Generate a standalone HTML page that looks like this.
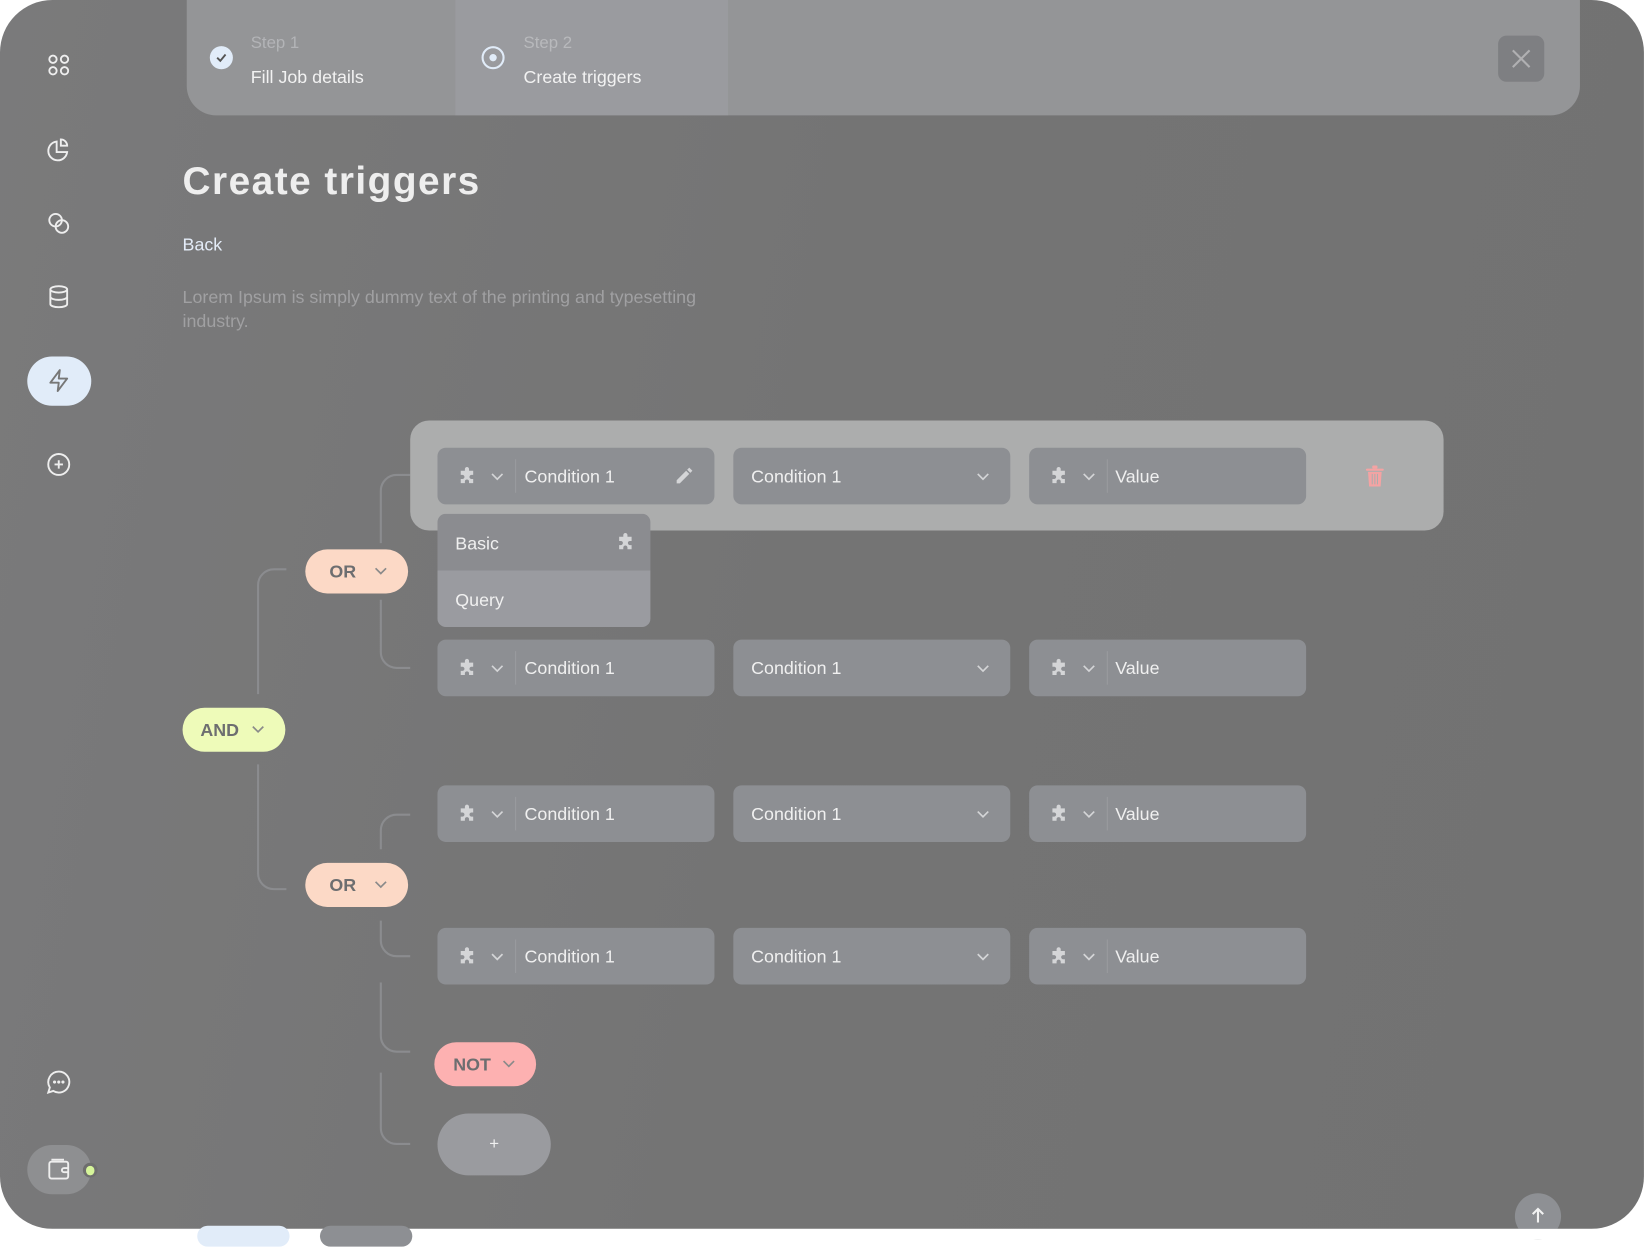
<!DOCTYPE html>
<html><head><meta charset="utf-8"><style>
html,body{margin:0;padding:0;background:#fff;overflow:hidden;width:1645px;height:1232px}
#s{position:absolute;left:0;top:0;width:1568px;height:1175px;transform:scale(1.0491,1.0485);transform-origin:0 0;font-family:"Liberation Sans",sans-serif}
.a{position:absolute}
.main{left:0;top:0;width:1567px;height:1172px;border-radius:50px;background:linear-gradient(100deg,#7a7a7b 0%,#747474 50%,#727272 100%);overflow:hidden}
.inp{position:absolute;height:54px;background:#8d8f93;border-radius:8px;color:#f0f0f0;font-size:17px;line-height:56px}
.pill{position:absolute;height:42px;border-radius:21px;color:#6d6e70;font-size:17px;font-weight:bold;line-height:43px}
.ico{position:absolute}
</style></head><body><div id="s">
<div class="a main"></div>

<!-- Sidebar -->
<svg class="ico" style="left:44px;top:50px" width="24" height="24" viewBox="0 0 24 24" fill="none" stroke="#eee" stroke-width="1.8"><rect x="3" y="3" width="7" height="7" rx="3.5"/><rect x="14" y="3" width="7" height="7" rx="3.5"/><rect x="3" y="14" width="7" height="7" rx="3.5"/><rect x="14" y="14" width="7" height="7" rx="3.5"/></svg>
<svg class="ico" style="left:44px;top:131px" width="24" height="24" viewBox="0 0 24 24" fill="none" stroke="#eee" stroke-width="1.8"><path d="M10 4a9 9 0 1 0 10 10H10z"/><path d="M14 2v6h6a6 6 0 0 0-6-6z"/></svg>
<svg class="ico" style="left:44px;top:201px" width="24" height="24" viewBox="0 0 24 24" fill="none" stroke="#eee" stroke-width="1.8"><circle cx="9" cy="9" r="6"/><circle cx="15" cy="15" r="6"/></svg>
<svg class="ico" style="left:44px;top:271px" width="24" height="24" viewBox="0 0 24 24" fill="none" stroke="#eee" stroke-width="1.8"><ellipse cx="12" cy="5" rx="8" ry="3"/><path d="M4 5v14c0 1.7 3.6 3 8 3s8-1.3 8-3V5M4 12c0 1.7 3.6 3 8 3s8-1.3 8-3"/></svg>
<div class="a" style="left:26px;top:340px;width:61px;height:47px;border-radius:24px;background:#e1ecf9"></div>
<svg class="ico" style="left:44px;top:351px" width="24" height="24" viewBox="0 0 24 24" fill="none" stroke="#777" stroke-width="1.8" stroke-linejoin="round"><path d="M13 2L4 14h8l-1 8 9-12h-8z"/></svg>
<svg class="ico" style="left:44px;top:431px" width="24" height="24" viewBox="0 0 24 24" fill="none" stroke="#eee" stroke-width="1.8"><circle cx="12" cy="12" r="10"/><path d="M12 8v8M8 12h8"/></svg>
<svg class="ico" style="left:44px;top:1020px" width="24" height="24" viewBox="0 0 24 24" fill="none" stroke="#eee" stroke-width="1.8"><path d="M12 2a10 10 0 0 0-8.5 15.2L2 22l4.8-1.5A10 10 0 1 0 12 2z"/><circle cx="8" cy="12" r=".6" fill="#eee"/><circle cx="12" cy="12" r=".6" fill="#eee"/><circle cx="16" cy="12" r=".6" fill="#eee"/></svg>
<div class="a" style="left:26px;top:1092px;width:61px;height:47px;border-radius:24px;background:#8e8f91"></div>
<svg class="ico" style="left:44px;top:1103px" width="24" height="24" viewBox="0 0 24 24" fill="none" stroke="#eee" stroke-width="1.8"><rect x="3" y="5" width="18" height="16" rx="2"/><path d="M5 3h12M21 11h-4a2 2 0 0 0 0 4h4"/></svg>
<div class="a" style="left:79px;top:1109px;width:14px;height:14px;border-radius:7px;background:#6e6e6e"></div>
<div class="a" style="left:82px;top:1112px;width:8px;height:9px;border-radius:5px;background:#d6f59a"></div>

<!-- Steps header -->
<div class="a" style="left:178px;top:0;width:1328px;height:110px;background:#949597;border-radius:0 0 28px 28px;overflow:hidden">
 <div class="a" style="left:256px;top:0;width:260px;height:110px;background:#9a9b9f"></div>
</div>
<svg class="ico" style="left:199px;top:43px" width="24" height="24" viewBox="0 0 24 24"><circle cx="12" cy="12" r="11" fill="#e1ecf9"/><path d="M8 12l3 3 5-6" fill="none" stroke="#555" stroke-width="1.8"/></svg>
<div class="a" style="left:239px;top:33px;color:#b3b4b7;font-size:16px">Step 1</div>
<div class="a" style="left:239px;top:64px;color:#f2f2f2;font-size:17px">Fill Job details</div>
<svg class="ico" style="left:458px;top:43px" width="24" height="24" viewBox="0 0 24 24"><circle cx="12" cy="12" r="10" fill="none" stroke="#e1ecf9" stroke-width="2"/><circle cx="12" cy="12" r="3.5" fill="#e1ecf9"/></svg>
<div class="a" style="left:499px;top:33px;color:#b8b9bc;font-size:16px">Step 2</div>
<div class="a" style="left:499px;top:64px;color:#f2f2f2;font-size:17px">Create triggers</div>
<div class="a" style="left:1428px;top:34px;width:44px;height:44px;border-radius:8px;background:#7e7f82"></div>
<svg class="ico" style="left:1440px;top:46px" width="20" height="20" viewBox="0 0 20 20" stroke="#b0b0b2" stroke-width="2"><path d="M2 2l16 16M18 2L2 18"/></svg>

<!-- Title -->
<div class="a" style="left:174px;top:152px;color:#eeeeee;font-size:37px;font-weight:bold;letter-spacing:1.4px">Create triggers</div>
<div class="a" style="left:174px;top:224px;color:#e4ecf8;font-size:17px">Back</div>
<div class="a" style="left:174px;top:272px;color:#a0a0a2;font-size:17px;line-height:23px;width:540px">Lorem Ipsum is simply dummy text of the printing and typesetting industry.</div>

<!-- connector lines -->
<svg class="ico" style="left:0;top:0" width="1568" height="1175" fill="none" stroke="#8b8c8f" stroke-width="2">
 <path d="M273 543h-12a15 15 0 0 0-15 15v104"/>
 <path d="M246 729v104a15 15 0 0 0 15 15h12"/>
 <path d="M391 453h-13a15 15 0 0 0-15 15v50"/>
 <path d="M363 572v50a15 15 0 0 0 15 15h13"/>
 <path d="M391 777h-13a15 15 0 0 0-15 15v18"/>
 <path d="M363 878v19a15 15 0 0 0 15 15h13"/>
 <path d="M363 937v51a15 15 0 0 0 15 15h13"/>
 <path d="M363 1023v53a15 15 0 0 0 15 15h13"/>
</svg>

<!-- highlight row -->
<div class="a" style="left:391px;top:401px;width:985px;height:105px;border-radius:18px;background:#acadad"></div>

<div id="rows"></div>

<!-- dropdown -->
<div class="a" style="left:417px;top:490px;width:203px;height:108px;border-radius:8px;overflow:hidden">
 <div class="a" style="left:0;top:0;width:203px;height:54px;background:#8b8c90"></div>
 <div class="a" style="left:0;top:54px;width:203px;height:54px;background:#9a9ba0"></div>
 <div class="a" style="left:17px;top:19px;color:#f0f0f0;font-size:17px">Basic</div>
 <div class="a" style="left:17px;top:73px;color:#f0f0f0;font-size:17px">Query</div>
 <svg class="ico" style="left:170px;top:18px" width="19" height="19" viewBox="0 0 24 24" fill="#d4d5d7"><path d="M9 3a2.5 2.5 0 0 1 5 0v2h5v5h-2a2.5 2.5 0 0 0 0 5h2v5h-5v-2a2.5 2.5 0 0 0-5 0v2H4v-5h2a2.5 2.5 0 0 0 0-5H4V5h5z"/></svg>
</div>

<!-- trash -->
<svg class="ico" style="left:1301px;top:444px" width="19" height="20" viewBox="0 0 19 20" fill="#f4a3a3"><rect x="1" y="3" width="17" height="2" rx="1"/><rect x="7" y="0" width="5" height="3" rx="1"/><path d="M3 6h13l-1 14H4z"/><path d="M7 8v10M9.5 8v10M12 8v10" stroke="#acadad" stroke-width="1"/></svg>

<!-- pills -->
<div class="pill" style="left:291px;top:524px;width:98px;background:#fcd9c6"><span class="a" style="left:23px">OR</span><svg class="ico" style="left:66px;top:16px" width="12" height="9" viewBox="0 0 12 9" fill="none" stroke="#8a8a8a" stroke-width="1.6"><path d="M1 2l5 5 5-5"/></svg></div>
<div class="pill" style="left:174px;top:675px;width:98px;background:#eefbb9"><span class="a" style="left:17px">AND</span><svg class="ico" style="left:66px;top:16px" width="12" height="9" viewBox="0 0 12 9" fill="none" stroke="#8a8a8a" stroke-width="1.6"><path d="M1 2l5 5 5-5"/></svg></div>
<div class="pill" style="left:291px;top:823px;width:98px;background:#fcd9c6"><span class="a" style="left:23px">OR</span><svg class="ico" style="left:66px;top:16px" width="12" height="9" viewBox="0 0 12 9" fill="none" stroke="#8a8a8a" stroke-width="1.6"><path d="M1 2l5 5 5-5"/></svg></div>
<div class="pill" style="left:414px;top:994px;width:97px;background:#fdb1b1"><span class="a" style="left:18px">NOT</span><svg class="ico" style="left:65px;top:16px" width="12" height="9" viewBox="0 0 12 9" fill="none" stroke="#8a8a8a" stroke-width="1.6"><path d="M1 2l5 5 5-5"/></svg></div>
<div class="a" style="left:417px;top:1062px;width:108px;height:59px;border-radius:30px;background:#9a9b9f;color:#f0f0f0;text-align:center;line-height:59px;font-size:16px">+</div>

<!-- scroll top -->
<div class="a" style="left:1444px;top:1138px;width:44px;height:44px;border-radius:22px;background:#8e9094"></div>
<svg class="ico" style="left:1458px;top:1151px" width="16" height="16" viewBox="0 0 16 16" fill="none" stroke="#f2f2f2" stroke-width="2"><path d="M8 15V2M3 7l5-5 5 5"/></svg>
<div class="a" style="left:0;top:1172px;width:1568px;height:10px;background:#fff"></div>
<!-- peeking pills bottom -->
<div class="a" style="left:188px;top:1169px;width:88px;height:20px;border-radius:10px;background:#e1ecf9"></div>
<div class="a" style="left:305px;top:1169px;width:88px;height:20px;border-radius:10px;background:#8d8f93"></div>
</div>
<script>
var ys=[427,610,749,885],h='';
var pz='<svg class="ico" style="left:19px;top:18px" width="19" height="19" viewBox="0 0 24 24" fill="#d4d5d7"><path d="M9 3a2.5 2.5 0 0 1 5 0v2h5v5h-2a2.5 2.5 0 0 0 0 5h2v5h-5v-2a2.5 2.5 0 0 0-5 0v2H4v-5h2a2.5 2.5 0 0 0 0-5H4V5h5z"/></svg>';
function ch(x){return '<svg class="ico" style="left:'+x+'px;top:23px" width="12" height="9" viewBox="0 0 12 9" fill="none" stroke="#d4d5d7" stroke-width="1.6"><path d="M1 2l5 5 5-5"/></svg>';}
var sep='<div class="a" style="left:74px;top:11px;width:1px;height:32px;background:#9a9b9f"></div>';
ys.forEach(function(y,i){
 h+='<div class="inp" style="left:417px;top:'+y+'px;width:264px">'+pz+ch(51)+sep+'<span class="a" style="left:83px">Condition 1</span>'+(i==0?'<svg class="ico" style="left:226px;top:18px" width="18" height="18" viewBox="0 0 18 18" fill="#d4d5d7"><path d="M2 13l9-9 3 3-9 9H2zM12 3l2-2 3 3-2 2z"/></svg>':'')+'</div>';
 h+='<div class="inp" style="left:699px;top:'+y+'px;width:264px"><span class="a" style="left:17px">Condition 1</span>'+ch(232)+'</div>';
 h+='<div class="inp" style="left:981px;top:'+y+'px;width:264px">'+pz+ch(51)+sep+'<span class="a" style="left:82px">Value</span></div>';
});
document.getElementById('rows').outerHTML=h;
</script>
</body></html>
